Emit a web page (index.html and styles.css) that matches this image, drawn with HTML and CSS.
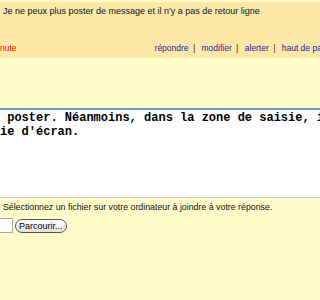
FILE: index.html
```html
<!DOCTYPE html>
<html lang="fr">
<head>
    <meta charset="UTF-8">
    <title>Répondre au message</title>
    <link rel="stylesheet" href="styles.css">
</head>
<body>
    <div class="strip"></div>
    <div class="message">
        <div class="message-title">Je ne peux plus poster de message et il n'y a pas de retour ligne</div>
        <div class="message-foot">
            <span class="date">nute</span>
            <span class="actions">
                <a href="#">répondre</a> |
                <a href="#">modifier</a> |
                <a href="#">alerter</a> |
                <a href="#">haut de page</a>
            </span>
        </div>
    </div>
    <div class="gap"></div>
    <div class="editor"> poster. Néanmoins, dans la zone de saisie, il
ie d'écran.</div>
    <div class="attach">
        <div class="attach-help">: Sélectionnez un fichier sur votre ordinateur à joindre à votre réponse.</div>
        <div class="attach-row">
            <span class="file-field"></span>
            <button class="browse">Parcourir...</button>
        </div>
    </div>
</body>
</html>
```

FILE: styles.css
```css
body {
    margin: 0;
    background-color: #fffbc9;
    font-family: "Liberation Sans", Arial, sans-serif;
    font-size: 8.5px;
    color: #111;
    overflow: hidden;
    white-space: nowrap;
}
.strip {
    height: 2px;
    background-color: #fffbc9;
}
.message {
    background-color: #fee8a7;
    height: 56px;
    display: flex;
    flex-direction: column;
    justify-content: space-between;
}
.message-title {
    padding: 4px 0 0 3px;
    font-size: 9px;
}
.message-foot {
    display: flex;
    padding-bottom: 5px;
}
.date {
    color: #ff1a00;
}
.actions {
    margin-left: 138px;
    color: #222;
}
.actions a {
    color: #1b1ba8;
    text-decoration: none;
    margin: 0 2px 0 4px;
}
.actions a:first-child {
    margin-left: 0;
}
.gap {
    height: 50px;
}
.editor {
    background-color: white;
    border-top: 2px solid #7399c2;
    border-bottom: 1px solid #c9c9c9;
    height: 86px;
    padding-top: 1px;
    font-family: "Liberation Mono", "Courier New", monospace;
    font-size: 12px;
    font-weight: bold;
    line-height: 14px;
    color: #000;
    white-space: pre;
    overflow: hidden;
}
.attach {
    padding: 4px 0 0 1px;
}
.attach-help {
    font-size: 8.8px;
    margin-left: -3px;
}
.attach-row {
    display: flex;
    align-items: center;
    gap: 2px;
    margin-top: 6px;
}
.file-field {
    width: 12px;
    height: 13px;
    margin-left: -1px;
    background-color: white;
    border: 1px solid #a5a5a5;
    border-left: none;
}
.browse {
    font-family: "Liberation Sans", Arial, sans-serif;
    font-size: 9px;
    color: #000;
    height: 14px;
    padding: 0 3px;
    border: 1px solid #555;
    border-radius: 7px;
    background: linear-gradient(#ffffff, #e0e0e0);
}
```
